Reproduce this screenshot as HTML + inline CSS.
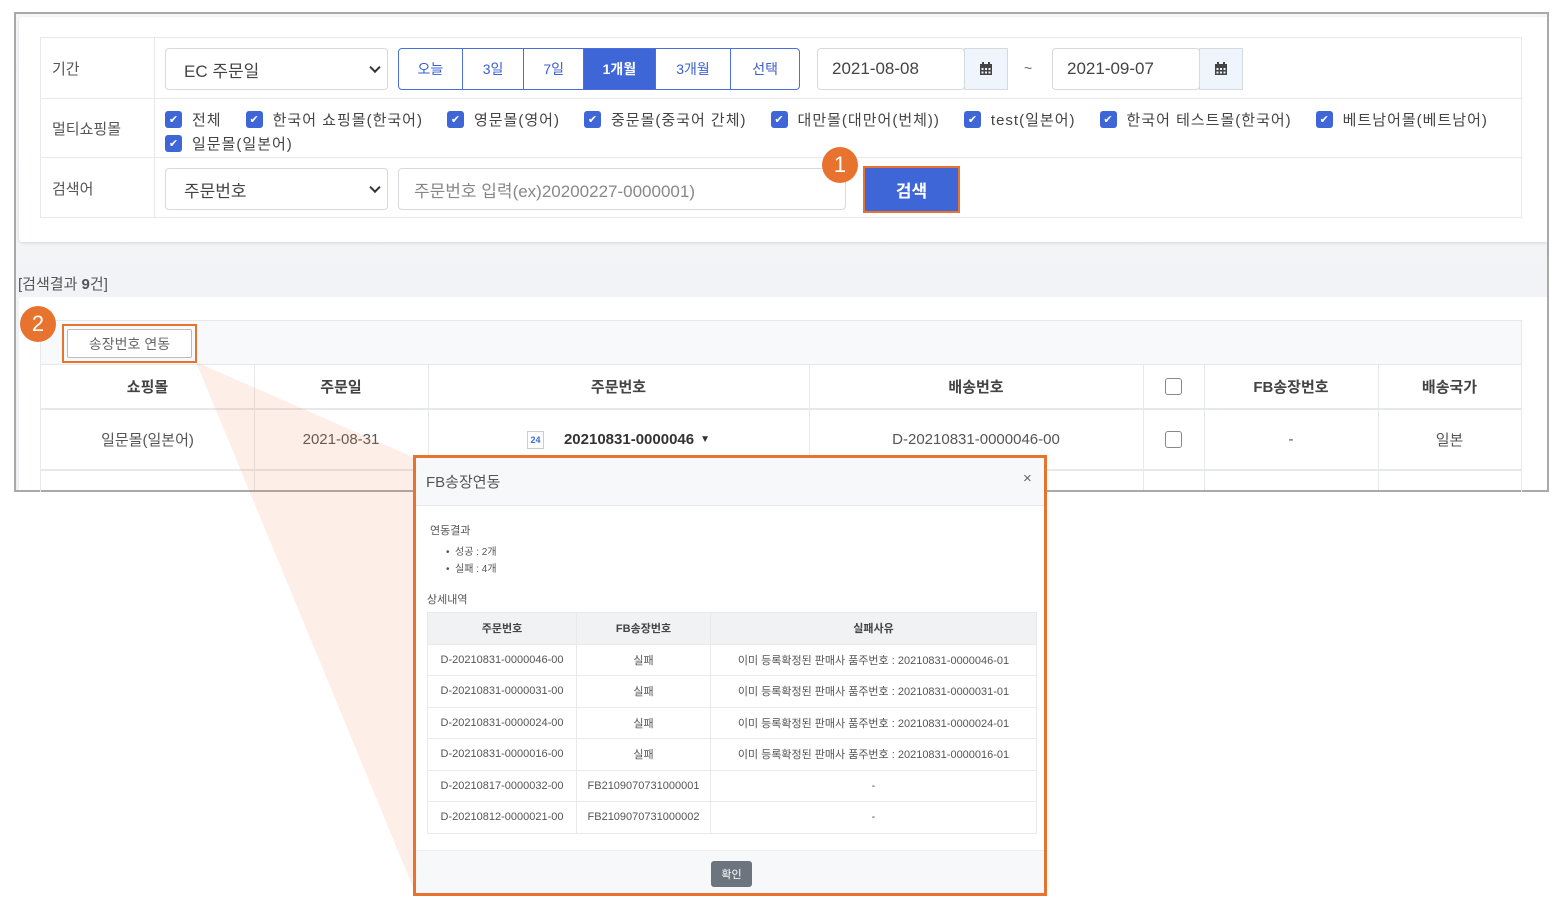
<!DOCTYPE html>
<html><head><meta charset="utf-8"><style>
*{box-sizing:border-box;margin:0;padding:0}
body{width:1565px;height:907px;background:#fff;font-family:"Liberation Sans","Noto Sans CJK KR",sans-serif;color:#555;position:relative;overflow:hidden}
.abs{position:absolute}
.frame{left:14px;top:12px;width:1535px;height:480px;border:2px solid #a9a9a9;background:linear-gradient(#f6f7f9,#eef0f3);overflow:hidden}
.card1{left:3px;top:3px;width:1529px;height:225px;background:#fff;border-radius:3px;box-shadow:0 1px 3px rgba(0,0,0,.12)}
.st{left:40px;top:37px;width:1482px;height:181px;border:1px solid #e6e8ea}
.lbl{font-size:15px;color:#555}
.sel{border:1px solid #d7dadd;border-radius:4px;background:#fff;font-size:17px;color:#444;padding-left:18px;display:flex;align-items:center}
.dd:after{content:"";position:absolute;right:8px;top:50%;width:6px;height:6px;border-right:2px solid #333;border-bottom:2px solid #333;transform:translateY(-70%) rotate(45deg)}
.btngrp{left:398px;top:48px;width:402px;height:42px;border:1px solid #4a6fdc;border-radius:4px;display:flex;overflow:hidden}
.btngrp div{border-right:1px solid #4a6fdc;color:#3b5fd0;font-size:14px;display:flex;align-items:center;justify-content:center}
.btngrp div:last-child{border-right:none}
.btngrp .on{background:#3e66d6;color:#fff;font-weight:bold}
.date{border:1px solid #d7dadd;border-radius:4px;height:42px;font-size:17px;color:#444;display:flex;align-items:center;padding-left:14px;background:#fff}
.cal{border:1px solid #d7dadd;background:#eef5fc;height:42px;width:44px;display:flex;align-items:center;justify-content:center}
.cb{display:inline-flex;align-items:center;font-size:15px;color:#444;margin-right:24px;letter-spacing:1px}
.cb i{width:17px;height:17px;background:#3e66d6;border-radius:3px;margin-right:10px;display:inline-flex;align-items:center;justify-content:center;color:#fff;font-size:11px;font-style:normal;letter-spacing:0}
.badge{width:36px;height:36px;border-radius:50%;background:#e8732f;color:#fff;font-size:22px;display:flex;align-items:center;justify-content:center}
.hline{height:1px;background:#e6e8ea}
.vl{width:1px;background:#e6e8ea}
.th{font-size:15px;font-weight:bold;color:#444;display:flex;align-items:center;justify-content:center}
.td{font-size:15px;color:#555;display:flex;align-items:center;justify-content:center}
.box{width:17px;height:17px;border:1.5px solid #888;border-radius:3px;background:#fff}
.mt td,.mt th{border:1px solid #e7e9eb;font-size:11px;color:#555;text-align:center;font-weight:normal;height:31.5px}
.mt th{background:#f1f2f3;font-weight:bold;color:#444}
</style></head><body>
<div class="abs frame">
 <div class="abs card1"></div>
 <div class="abs" style="left:3px;top:283px;width:1529px;height:200px;background:#fff;border-radius:3px"></div>
</div>
<div class="abs st"></div>
<div class="abs" style="left:41px;top:38px;width:113px;height:179px;background:#fff"></div>
<div class="abs vl" style="left:154px;top:38px;height:179px"></div>
<div class="abs hline" style="left:41px;top:98px;width:1480px"></div>
<div class="abs hline" style="left:41px;top:157px;width:1480px"></div>
<div class="abs lbl" style="left:52px;top:58px">기간</div>
<div class="abs lbl" style="left:52px;top:118px">멀티쇼핑몰</div>
<div class="abs lbl" style="left:52px;top:178px">검색어</div>
<div class="abs sel dd" style="left:165px;top:48px;width:223px;height:42px">EC 주문일</div>
<div class="abs btngrp"><div style="width:64px">오늘</div><div style="width:62px">3일</div><div style="width:60px">7일</div><div class="on" style="width:72px">1개월</div><div style="width:76px">3개월</div><div style="width:68px">선택</div></div>
<div class="abs date" style="left:817px;top:48px;width:148px">2021-08-08</div>
<div class="abs cal" style="left:964px;top:48px"><svg width="14" height="14" viewBox="0 0 14 14"><rect x="1" y="2" width="12" height="11" fill="#444"/><rect x="3" y="0" width="2" height="3" fill="#444"/><rect x="9" y="0" width="2" height="3" fill="#444"/><g fill="#eef5fc"><rect x="2.5" y="6" width="2" height="2"/><rect x="6" y="6" width="2" height="2"/><rect x="9.5" y="6" width="2" height="2"/><rect x="2.5" y="9.5" width="2" height="2"/><rect x="6" y="9.5" width="2" height="2"/><rect x="9.5" y="9.5" width="2" height="2"/></g></svg></div>
<div class="abs" style="left:1024px;top:60px;font-size:14px;color:#666">~</div>
<div class="abs date" style="left:1052px;top:48px;width:148px">2021-09-07</div>
<div class="abs cal" style="left:1199px;top:48px"><svg width="14" height="14" viewBox="0 0 14 14"><rect x="1" y="2" width="12" height="11" fill="#444"/><rect x="3" y="0" width="2" height="3" fill="#444"/><rect x="9" y="0" width="2" height="3" fill="#444"/><g fill="#eef5fc"><rect x="2.5" y="6" width="2" height="2"/><rect x="6" y="6" width="2" height="2"/><rect x="9.5" y="6" width="2" height="2"/><rect x="2.5" y="9.5" width="2" height="2"/><rect x="6" y="9.5" width="2" height="2"/><rect x="9.5" y="9.5" width="2" height="2"/></g></svg></div>
<div class="abs" style="left:165px;top:109px;white-space:nowrap">
<span class="cb"><i>✔</i>전체</span><span class="cb"><i>✔</i>한국어 쇼핑몰(한국어)</span><span class="cb"><i>✔</i>영문몰(영어)</span><span class="cb"><i>✔</i>중문몰(중국어 간체)</span><span class="cb"><i>✔</i>대만몰(대만어(번체))</span><span class="cb"><i>✔</i>test(일본어)</span><span class="cb"><i>✔</i>한국어 테스트몰(한국어)</span><span class="cb"><i>✔</i>베트남어몰(베트남어)</span></div>
<div class="abs" style="left:165px;top:133px"><span class="cb"><i>✔</i>일문몰(일본어)</span></div>
<div class="abs sel dd" style="left:165px;top:168px;width:223px;height:42px">주문번호</div>
<div class="abs sel" style="left:398px;top:168px;width:448px;height:42px;color:#888;padding-left:15px">주문번호 입력(ex)20200227-0000001)</div>
<div class="abs" style="left:863px;top:166px;width:97px;height:47px;border:2px solid #e8732f;background:#3e66d6;color:#fff;font-size:17px;font-weight:bold;display:flex;align-items:center;justify-content:center">검색</div>
<div class="abs badge" style="left:822px;top:147px">1</div>
<div class="abs" style="left:18px;top:273px;font-size:15px;color:#555">[검색결과 <b>9</b>건]</div>
<div class="abs" style="left:40px;top:320px;width:1482px;height:172px;border:1px solid #e6e8ea;border-bottom:none"></div>
<div class="abs" style="left:41px;top:321px;width:1480px;height:43px;background:#f8f9fa"></div>
<div class="abs" style="left:62px;top:324px;width:135px;height:39px;border:2px solid #e8732f;padding:3px"><div style="width:100%;height:100%;border:1px solid #bbb;border-radius:2px;background:#fff;font-size:14px;color:#666;display:flex;align-items:center;justify-content:center">송장번호 연동</div></div>
<div class="abs badge" style="left:20px;top:306px">2</div>
<div class="abs hline" style="left:41px;top:364px;width:1480px"></div>
<div class="abs hline" style="left:41px;top:408px;width:1480px;height:2px"></div>
<div class="abs hline" style="left:41px;top:469px;width:1480px;height:2px"></div>
<div class="abs vl" style="left:254px;top:364px;height:126px"></div>
<div class="abs vl" style="left:428px;top:364px;height:126px"></div>
<div class="abs vl" style="left:809px;top:364px;height:126px"></div>
<div class="abs vl" style="left:1143px;top:364px;height:126px"></div>
<div class="abs vl" style="left:1204px;top:364px;height:126px"></div>
<div class="abs vl" style="left:1378px;top:364px;height:126px"></div>
<div class="abs th" style="left:41px;top:364px;width:213px;height:44px">쇼핑몰</div>
<div class="abs th" style="left:254px;top:364px;width:174px;height:44px">주문일</div>
<div class="abs th" style="left:428px;top:364px;width:381px;height:44px">주문번호</div>
<div class="abs th" style="left:809px;top:364px;width:334px;height:44px">배송번호</div>
<div class="abs th" style="left:1143px;top:364px;width:61px;height:44px"><div class="box"></div></div>
<div class="abs th" style="left:1204px;top:364px;width:174px;height:44px">FB송장번호</div>
<div class="abs th" style="left:1378px;top:364px;width:143px;height:44px">배송국가</div>
<div class="abs td" style="left:41px;top:410px;width:213px;height:59px">일문몰(일본어)</div>
<div class="abs td" style="left:254px;top:410px;width:174px;height:59px">2021-08-31</div>
<div class="abs td" style="left:428px;top:410px;width:381px;height:59px;color:#333;font-weight:bold"><span style="display:inline-flex;width:17px;height:18px;border:1px solid #ccc;font-size:9px;color:#3a6fd0;font-weight:bold;align-items:center;justify-content:center;margin-right:20px">24</span>20210831-0000046 <span style="font-size:10px;margin-left:6px">▼</span></div>
<div class="abs td" style="left:809px;top:410px;width:334px;height:59px">D-20210831-0000046-00</div>
<div class="abs td" style="left:1143px;top:410px;width:61px;height:59px"><div class="box"></div></div>
<div class="abs td" style="left:1204px;top:410px;width:174px;height:59px">-</div>
<div class="abs td" style="left:1378px;top:410px;width:143px;height:59px">일본</div>
<svg class="abs" style="left:0;top:0" width="1565" height="907"><polygon points="196,362 415,458 415,892" fill="rgba(240,120,80,0.13)"/></svg>
<div class="abs" style="left:413px;top:455px;width:634px;height:441px;border:3px solid #e8732f;background:#fff">
 <div class="abs" style="left:0;top:0;width:628px;height:48px;background:#f7f8f9;border-bottom:1px solid #e7e9eb"></div>
 <div class="abs" style="left:10px;top:13px;font-size:15px;color:#555">FB송장연동</div>
 <div class="abs" style="left:607px;top:12px;font-size:15px;color:#666">×</div>
 <div class="abs" style="left:14px;top:64px;font-size:11px">연동결과</div>
 <div class="abs" style="left:30px;top:86px;font-size:10px;line-height:17px">•&nbsp;&nbsp;성공 : 2개<br>•&nbsp;&nbsp;실패 : 4개</div>
 <div class="abs" style="left:11px;top:133px;font-size:11px">상세내역</div>
 <table class="mt abs" style="left:11px;top:154px;width:610px;border-collapse:collapse">
 <tr><th style="width:149px">주문번호</th><th style="width:134px">FB송장번호</th><th>실패사유</th></tr>
 <tr><td>D-20210831-0000046-00</td><td>실패</td><td>이미 등록확정된 판매사 품주번호 : 20210831-0000046-01</td></tr>
 <tr><td>D-20210831-0000031-00</td><td>실패</td><td>이미 등록확정된 판매사 품주번호 : 20210831-0000031-01</td></tr>
 <tr><td>D-20210831-0000024-00</td><td>실패</td><td>이미 등록확정된 판매사 품주번호 : 20210831-0000024-01</td></tr>
 <tr><td>D-20210831-0000016-00</td><td>실패</td><td>이미 등록확정된 판매사 품주번호 : 20210831-0000016-01</td></tr>
 <tr><td>D-20210817-0000032-00</td><td>FB2109070731000001</td><td>-</td></tr>
 <tr><td>D-20210812-0000021-00</td><td>FB2109070731000002</td><td>-</td></tr>
 </table>
 <div class="abs" style="left:0;top:392px;width:628px;height:43px;background:#f7f8f9;border-top:1px solid #eee"></div>
 <div class="abs" style="left:295px;top:403px;width:41px;height:26px;background:#6c757d;border-radius:3px;color:#fff;font-size:11px;display:flex;align-items:center;justify-content:center">확인</div>
</div>
</body></html>
